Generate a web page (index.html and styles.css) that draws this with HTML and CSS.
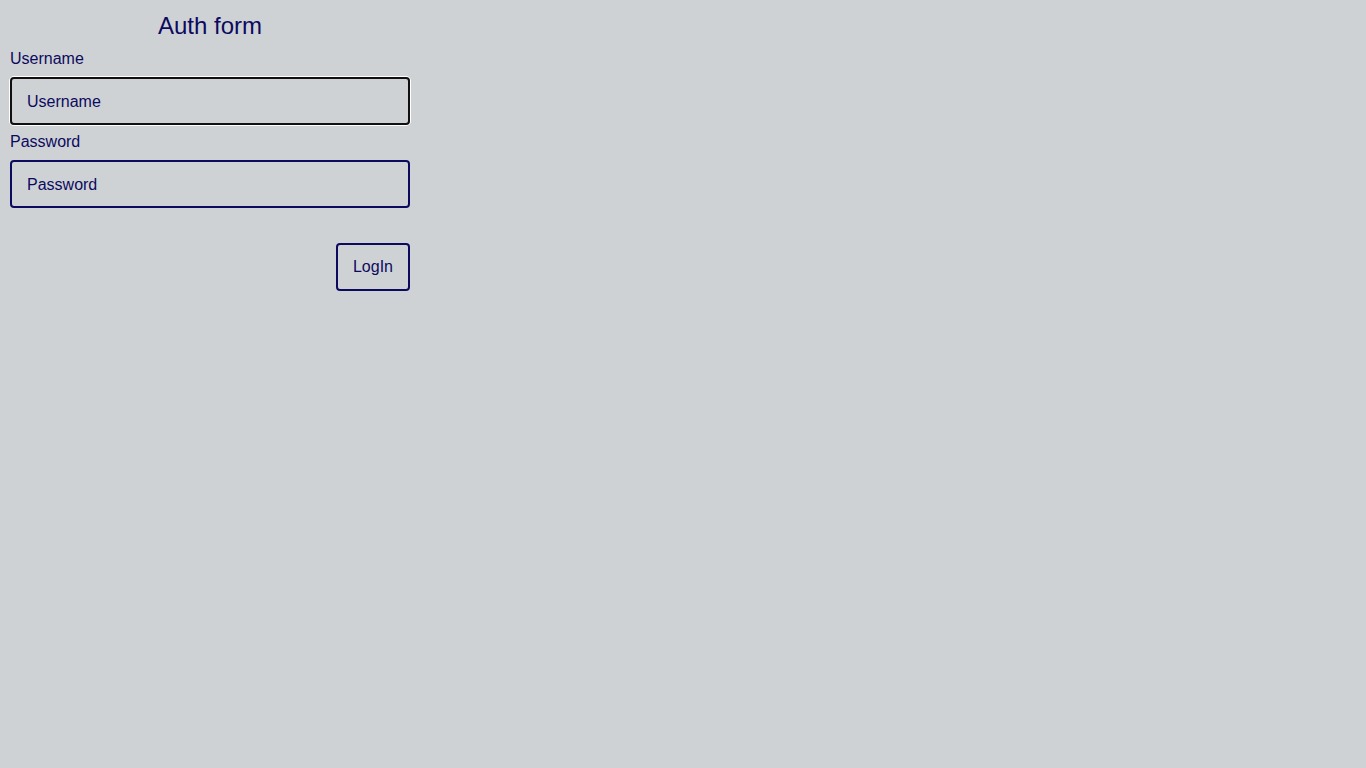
FILE: index.html
```html
<!DOCTYPE html>
<html lang="en">
<head>
<meta charset="utf-8">
<title>Auth form</title>
<link rel="stylesheet" href="styles.css">
</head>
<body>
<form class="auth-form">
  <h1 class="auth-title">Auth form</h1>
  <label class="field-label field-label--first" for="username">Username</label>
  <input class="field-input field-input--focused" id="username" type="text" placeholder="Username">
  <label class="field-label" for="password">Password</label>
  <input class="field-input field-input--last" id="password" type="password" placeholder="Password">
  <div class="actions">
    <button class="login-btn" type="button">LogIn</button>
  </div>
</form>
</body>
</html>
```

FILE: styles.css
```css
html, body {
  margin: 0;
  padding: 0;
  background: #cfd2d5;
}
body {
  font-family: "Liberation Sans", Arial, sans-serif;
  color: #0c0a5e;
  min-height: 768px;
}
.auth-form {
  width: 400px;
  padding: 12px 10px 0 10px;
  display: flex;
  flex-direction: column;
}
.auth-title {
  margin: 0;
  font-size: 24px;
  font-weight: 400;
  line-height: 28px;
  text-align: center;
  color: #0c0a5e;
}
.field-label {
  font-size: 16px;
  line-height: 18px;
  margin-top: 8px;
  color: #0c0a5e;
}
.field-label--first {
  margin-top: 10px;
}
.field-input {
  box-sizing: border-box;
  height: 48px;
  width: 400px;
  margin-top: 9px;
  padding: 1px 15px 0 15px;
  border: 2px solid #0c0a5e;
  border-radius: 4px;
  background: transparent;
  font-family: "Liberation Sans", Arial, sans-serif;
  font-size: 16px;
  color: #0c0a5e;
  outline: none;
}
.field-input::placeholder {
  color: #0c0a5e;
  opacity: 1;
}
.field-input--focused {
  border-color: #101010;
  box-shadow: 0 0 0 1px #ffffff;
}
.actions {
  display: flex;
  justify-content: flex-end;
  margin-top: 35px;
}
.login-btn {
  box-sizing: border-box;
  height: 48px;
  padding: 0 15px;
  border: 2px solid #0c0a5e;
  border-radius: 4px;
  background: transparent;
  font-family: "Liberation Sans", Arial, sans-serif;
  font-size: 16px;
  color: #0c0a5e;
  cursor: pointer;
}
```
